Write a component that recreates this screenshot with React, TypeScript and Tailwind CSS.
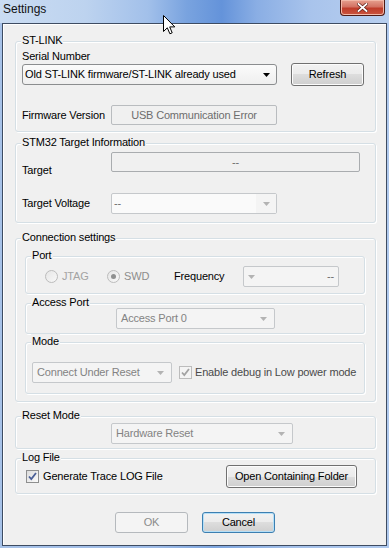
import React from 'react'

const btn =
  'flex items-center justify-center h-[23px] rounded-[3px] border border-[#707070] bg-[linear-gradient(#f2f2f2,#ebebeb_50%,#dddddd_50%,#cfcfcf)] shadow-[inset_0_0_0_1px_#fcfcfc] text-black'

const disabledCombo =
  'flex items-center h-[21px] rounded-[2px] border border-[#c5c8cb] bg-[#f4f4f4] text-[#838383] pl-[4px] pr-[7px]'

function Arrow({ color = '#000' }: { color?: string }) {
  return (
    <svg width="7" height="4" viewBox="0 0 7 4" aria-hidden="true" className="shrink-0">
      <path d="M0 0h7L3.5 4z" fill={color} />
    </svg>
  )
}

function GroupBox({ label, className, children }: { label: string; className: string; children?: React.ReactNode }) {
  return (
    <div className={`relative rounded-[3px] border border-[#d5dfe5] shadow-[inset_1px_1px_0_#fff,1px_1px_0_#fff] ${className}`}>
      <span className="absolute -top-[9px] left-[5px] px-[1px] bg-[#f0f0f0] leading-[14px] text-black">{label}</span>
      {children}
    </div>
  )
}

function Radio({ checked }: { checked?: boolean }) {
  return (
    <span className="flex items-center justify-center w-[13px] h-[13px] rounded-full border border-[#bcbcbc] bg-[linear-gradient(135deg,#e6e6e6,#f8f8f8)] shrink-0">
      {checked && <span className="w-[5px] h-[5px] rounded-full bg-[#8f9090]" />}
    </span>
  )
}

function Check({ disabled }: { disabled?: boolean }) {
  return (
    <span
      className={`flex items-center justify-center w-[13px] h-[13px] border shrink-0 ${
        disabled ? 'border-[#bcbcbc] bg-[#f4f4f4]' : 'border-[#8e8f8f] bg-[linear-gradient(135deg,#dcdcdc,#fbfbfb)]'
      }`}
    >
      <svg width="9" height="9" viewBox="0 0 9 9" aria-hidden="true">
        <path
          d="M1 4.5l2.3 2.6L8 1"
          fill="none"
          stroke={disabled ? '#a3a3a3' : '#4a5f97'}
          strokeWidth="1.8"
        />
      </svg>
    </span>
  )
}

function Cursor() {
  return (
    <svg className="absolute left-[163px] top-[15px]" width="13" height="20" viewBox="0 0 13 20" aria-hidden="true">
      <path d="M0.5 0.5V16.5L4.3 12.8L6.9 18.8L9.2 17.8L6.7 11.9H11.8Z" fill="#fff" stroke="#000" strokeWidth="1" strokeLinejoin="round" />
    </svg>
  )
}

export default function App() {
  return (
    <div className="relative w-[389px] h-[548px] overflow-hidden bg-[linear-gradient(90deg,#a7c2e8,#9ebbe6_40%,#7ea6df_55%,#a4c0e9_75%,#afc9ee)] font-['Liberation_Sans',Arial,sans-serif] text-[11px] tracking-[-0.17px] text-black">
      {/* Title bar */}
      <div className="flex items-start justify-between h-[23px] bg-[linear-gradient(90deg,#cadcf2_0%,#bdd3ef_22%,#a2c0ea_38%,#79a3df_48%,#6493da_57%,#8aaee4_66%,#a9c4ec_80%,#b8cfef_100%)]">
        <span className="pl-[3px] pt-[2px] text-[12px] tracking-normal leading-[15px] text-[#111]">Settings</span>
        <div className="mr-[4px] flex items-center justify-center w-[45px] h-[16px] rounded-b-[4px] border border-t-0 border-[#4e1a14] bg-[linear-gradient(#e6a08f,#d37263_45%,#bf3c2a_55%,#c9553f)] shadow-[inset_0_0_0_1px_#f1b8a8]">
          <svg width="11" height="9" viewBox="0 0 11 9" aria-hidden="true">
            <path d="M1.5 1l8 7M9.5 1l-8 7" stroke="#5a1c14" strokeWidth="3.2" strokeLinecap="square" />
            <path d="M1.5 1l8 7M9.5 1l-8 7" stroke="#fff" strokeWidth="1.8" strokeLinecap="square" />
          </svg>
        </div>
      </div>

      {/* Client area */}
      <div className="ml-[2px] w-[385px] h-[523px] border border-[#3e4c62] bg-[#f0f0f0] shadow-[inset_1px_1px_0_#fff]">
        {/* ST-LINK */}
        <GroupBox label="ST-LINK" className="ml-[12px] mt-[17px] w-[361px] h-[91px]">
          <div className="pl-[6px] pt-[8px] leading-[13px]">Serial Number</div>
          <div className="flex items-center h-[23px] pl-[6px]">
            <div className="flex items-center w-[255px] h-[21px] rounded-[3px] border border-[#8b8d8f] bg-[linear-gradient(#fbfbfb,#efefef)] pl-[2px] pr-[6px]">
              <span className="flex-1">Old ST-LINK firmware/ST-LINK already used</span>
              <Arrow />
            </div>
            <button className={`${btn} ml-[14px] w-[73px]`}>Refresh</button>
          </div>
          <div className="flex items-center mt-[19px] pl-[6px]">
            <span className="w-[89px]">Firmware Version</span>
            <div className="flex items-center justify-center w-[166px] h-[20px] rounded-[2px] border border-[#b9bcbf] bg-[#f0f0f0] text-[#6d6d6d]">
              USB Communication Error
            </div>
          </div>
        </GroupBox>

        {/* STM32 Target Information */}
        <GroupBox label="STM32 Target Information" className="ml-[12px] mt-[11px] w-[361px] h-[80px]">
          <div className="flex items-start mt-[8px] pl-[6px]">
            <span className="w-[89px] mt-[11px] leading-[14px]">Target</span>
            <div className="flex items-center justify-center w-[249px] h-[20px] rounded-[2px] border border-[#a9acaf] bg-[#f0f0f0] text-[#6d6d6d]">
              --
            </div>
          </div>
          <div className="flex items-center mt-[16px] pl-[6px]">
            <span className="w-[89px]">Target Voltage</span>
            <div className="flex w-[166px] h-[21px] rounded-[2px] border border-[#c5c8cb] bg-[#fafafa] text-[#6d6d6d]">
              <span className="flex-1 pl-[2px] leading-[19px]">--</span>
              <span className="flex items-center justify-center w-[20px] bg-[#f4f4f4]">
                <Arrow color="#b3b3b3" />
              </span>
            </div>
          </div>
        </GroupBox>

        {/* Connection settings */}
        <GroupBox label="Connection settings" className="ml-[12px] mt-[15px] w-[361px] h-[164px]">
          <GroupBox label="Port" className="ml-[9px] mt-[17px] w-[340px] h-[38px]">
            <div className="flex items-center mt-[9px] h-[21px]">
              <span className="flex items-center gap-[4px] ml-[19px] w-[62px] text-[#a3a3a3]">
                <Radio />
                JTAG
              </span>
              <span className="flex items-center gap-[4px] w-[67px] text-[#8d8d8d]">
                <Radio checked />
                SWD
              </span>
              <span className="w-[69px]">Frequency</span>
              <div className="flex items-center w-[96px] h-[21px] rounded-[2px] border border-[#c5c8cb] bg-[#f4f4f4] text-[#6d6d6d] pl-[4px] pr-[4px]">
                <Arrow color="#b3b3b3" />
                <span className="flex-1 text-right">--</span>
              </div>
            </div>
          </GroupBox>

          <GroupBox label="Access Port" className="ml-[9px] mt-[9px] w-[340px] h-[31px]">
            <div className={`${disabledCombo} ml-[90px] mt-[4px] w-[159px]`}>
              <span className="flex-1">Access Port 0</span>
              <Arrow color="#b3b3b3" />
            </div>
          </GroupBox>

          <GroupBox label="Mode" className="ml-[9px] mt-[8px] w-[340px] h-[52px]">
            <div className="flex items-center mt-[19px] ml-[6px]">
              <div className={`${disabledCombo} w-[140px]`}>
                <span className="flex-1">Connect Under Reset</span>
                <Arrow color="#b3b3b3" />
              </div>
              <span className="ml-[7px]">
                <Check disabled />
              </span>
              <span className="ml-[3px] text-[#4a4a4a]">Enable debug in Low power mode</span>
            </div>
          </GroupBox>
        </GroupBox>

        {/* Reset Mode */}
        <GroupBox label="Reset Mode" className="ml-[12px] mt-[14px] w-[361px] h-[33px]">
          <div className={`${disabledCombo} ml-[95px] mt-[6px] w-[182px]`}>
            <span className="flex-1">Hardware Reset</span>
            <Arrow color="#b3b3b3" />
          </div>
        </GroupBox>

        {/* Log File */}
        <GroupBox label="Log File" className="ml-[12px] mt-[9px] w-[361px] h-[36px]">
          <div className="flex items-center mt-[6px] pl-[10px] pr-[18px]">
            <Check />
            <span className="ml-[4px]">Generate Trace LOG File</span>
            <button className={`${btn} ml-auto w-[131px]`}>Open Containing Folder</button>
          </div>
        </GroupBox>

        {/* Dialog buttons */}
        <div className="flex mt-[18px] ml-[112px]">
          <button className="flex items-center justify-center w-[73px] h-[21px] rounded-[3px] border border-[#b5b9bd] bg-[#f4f4f4] text-[#8b8b8b]">
            OK
          </button>
          <button className="ml-[14px] flex items-center justify-center w-[73px] h-[21px] rounded-[3px] border border-[#3c7fb1] bg-[linear-gradient(#f2f2f2,#ebebeb_50%,#dddddd_50%,#cfcfcf)] shadow-[inset_0_0_0_1px_#b5dff7] text-black">
            Cancel
          </button>
        </div>
      </div>

      <Cursor />
    </div>
  )
}
